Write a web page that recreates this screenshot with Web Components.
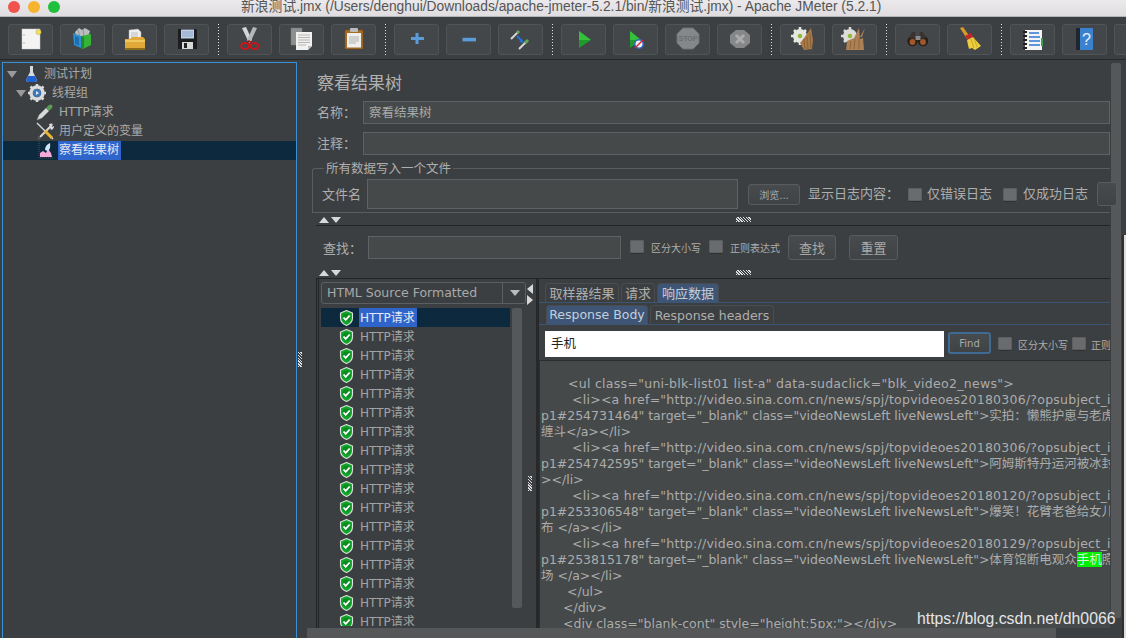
<!DOCTYPE html>
<html lang="zh">
<head>
<meta charset="utf-8">
<title>JMeter</title>
<style>
html,body{margin:0;padding:0;background:#3c3f41}
body{width:1126px;height:638px;overflow:hidden;font:12px "DejaVu Sans","Noto Sans CJK SC",sans-serif;color:#b4b4b4}
</style>
</head>
<body>
<jm-title>新浪测试.jmx (/Users/denghui/Downloads/apache-jmeter-5.2.1/bin/新浪测试.jmx) - Apache JMeter (5.2.1)</jm-title>

<jm-toolbar>
  <jm-tool><svg viewBox="0 0 45 31"><rect x="14" y="5" width="18" height="20" fill="#f4f4f2" stroke="#cfcfcf" stroke-width=".5"/><circle cx="16" cy="11" r=".7" fill="#999"/><circle cx="16" cy="19" r=".7" fill="#999"/><circle cx="30.500" cy="8" r="2.600" fill="#f2df6b" stroke="#b9a83c" stroke-width=".5"/></svg></jm-tool>
  <jm-tool><svg viewBox="0 0 45 31"><path d="M15 8l4-4 3 2 3-2 5 3-2 6H16z" fill="#b9bdc0"/><path d="M18 6l2 7M23 5l1 8" stroke="#85898c" stroke-width=".8"/><path d="M13 9l8 3v12l-7-3z" fill="#2f8fd0"/><path d="M15 12l4 1.500v8l-4-1.500z" fill="#1f6fae"/><path d="M21 12l10-2v11l-8 4-2-1z" fill="#35b336"/><path d="M21 12l3 1v12l-3-1z" fill="#1f8a2a"/></svg></jm-tool>
  <jm-tool><svg viewBox="0 0 45 31"><path d="M17 6l9-1 3 3 0 9H17z" fill="#efefef" stroke="#aaa" stroke-width=".5"/><path d="M19 9h7M19 11h7M19 13h7" stroke="#aaa" stroke-width=".7"/><path d="M13 15h5l2-2h11l2 2v9l-1 2H14l-1-1z" fill="#e1a93a"/><path d="M13 16h20v2H13z" fill="#f0c860"/><path d="M14 26h18l1-2H13z" fill="#8d6a1c"/></svg></jm-tool>
  <jm-tool><svg viewBox="0 0 45 31"><path d="M14 5h18l1 1v19H14z" fill="#1c1d20"/><rect x="17" y="5.500" width="13" height="9" fill="#bcd0e6"/><path d="M18 8h11M18 10h11M18 12h11" stroke="#7d97b5" stroke-width=".7"/><rect x="18" y="18" width="11" height="7" fill="#d8d8d8"/><rect x="20" y="19" width="3" height="5" fill="#222"/></svg></jm-tool>
  <jm-sep></jm-sep>
  <jm-tool><svg viewBox="0 0 45 31"><path d="M15 4l4-1 6 13-3 3z" fill="#d4d6d8"/><path d="M30 4l-4-1-6 13 3 3z" fill="#b4b6b8"/><ellipse cx="18" cy="22" rx="3.800" ry="3" fill="none" stroke="#c8161b" stroke-width="2"/><ellipse cx="27.500" cy="22" rx="3.800" ry="3" fill="none" stroke="#c8161b" stroke-width="2"/><path d="M20 19l2-2 3 2" stroke="#a51216" fill="none" stroke-width="1.500"/></svg></jm-tool>
  <jm-tool><svg viewBox="0 0 45 31"><rect x="12" y="4" width="11" height="17" fill="#8d8f91" stroke="#77797b" stroke-width=".5"/><path d="M17 8h16v14l-4 4H17z" fill="#f1f1ef"/><path d="M19 11h12M19 13.500h12M19 16h12M19 18.500h12M19 21h8" stroke="#999" stroke-width=".7"/><path d="M29 26l4-4h-4z" fill="#bdbdbd"/></svg></jm-tool>
  <jm-tool><svg viewBox="0 0 45 31"><rect x="14" y="6" width="18" height="19" rx="1" fill="#a66c25" stroke="#7a4c16" stroke-width=".5"/><rect x="16" y="9" width="14" height="14.500" fill="#efefed"/><path d="M18 13h10M18 15h10M18 17h10M18 19h7" stroke="#999" stroke-width=".7"/><rect x="19" y="4" width="8" height="4" rx="1" fill="#b9bbbd"/></svg></jm-tool>
  <jm-sep></jm-sep>
  <jm-tool><svg viewBox="0 0 45 31"><path d="M23 9v11M17 14.500h13" stroke="#5b9bd8" stroke-width="3"/></svg></jm-tool>
  <jm-tool><svg viewBox="0 0 45 31"><rect x="16.500" y="13.800" width="13.500" height="3.600" fill="#5b9bd8"/></svg></jm-tool>
  <jm-tool><svg viewBox="0 0 45 31"><path d="M13 15l7-7" stroke="#d5d5d5" stroke-width="2"/><path d="M19 9l2-2" stroke="#62a85b" stroke-width="3"/><path d="M21 25l7-7" stroke="#d5d5d5" stroke-width="2"/><path d="M27 19l3-3" stroke="#62a85b" stroke-width="3"/><path d="M19 12l5 5" stroke="#2a6fd2" stroke-width="2"/><path d="M26 19l-5-1 3-3z" fill="#2a6fd2"/></svg></jm-tool>
  <jm-sep></jm-sep>
  <jm-tool><svg viewBox="0 0 45 31"><path d="M18 7l12 9-12 8z" fill="#1f9a2c"/><path d="M18 7l12 9-12 0z" fill="#37c03c"/></svg></jm-tool>
  <jm-tool><svg viewBox="0 0 45 31"><path d="M17 7l11 9-11 8z" fill="#1f9a2c"/><path d="M17 7l11 9-11 0z" fill="#37c03c"/><circle cx="26" cy="20" r="4.200" fill="#eef2f8" stroke="#2c68c8" stroke-width="1.500"/><path d="M22 24l8-8" stroke="#d8242a" stroke-width="1.500"/></svg></jm-tool>
  <jm-tool><svg viewBox="0 0 45 31"><path d="M18 4h10l6 6v9l-6 6H18l-6-6v-9z" fill="#858789" stroke="#6f7173"/><text x="23" y="17" text-anchor="middle" font-family="Liberation Sans" font-weight="700" font-size="7" fill="#6c6e70">STOP</text></svg></jm-tool>
  <jm-tool><svg viewBox="0 0 45 31"><path d="M19 6h8l6 5v8l-6 5h-8l-6-5v-8z" fill="#858789"/><path d="M19 11l8 8M27 11l-8 8" stroke="#a9abad" stroke-width="3"/></svg></jm-tool>
  <jm-sep></jm-sep>
  <jm-tool><svg viewBox="0 0 45 31"><circle cx="20" cy="12" r="7" fill="#e6e6e2"/><path d="M20 3v3M20 18v3M11 12h3M26 12h3M14 6l2 2M26 6l-2 2M14 18l2-2" stroke="#e6e6e2" stroke-width="2.500"/><circle cx="20" cy="12" r="2.300" fill="#93b93c"/><path d="M31 4l-7 10-4 5 4 7 8-1 1-9z" fill="#a97a48"/><path d="M24 15l1 10M27 13l1 12M30 9l1 15" stroke="#7c552c" stroke-width=".7"/></svg></jm-tool>
  <jm-tool><svg viewBox="0 0 45 31"><circle cx="18" cy="12" r="7" fill="#dcdcd8"/><path d="M18 3v3M18 18v3M9 12h3M24 12h3M12 6l2 2M12 18l2-2" stroke="#dcdcd8" stroke-width="2.500"/><circle cx="18" cy="12" r="2.300" fill="#93b93c"/><path d="M33 4l-5 9 2 0 3-9zM27 4l-5 10-7 3-1 9 18 0-1-12-3 1z" fill="#ad8155"/><path d="M19 17l-1 8M23 15l-1 10M27 14v11" stroke="#80592f" stroke-width=".7"/></svg></jm-tool>
  <jm-sep></jm-sep>
  <jm-tool><svg viewBox="0 0 45 31"><circle cx="17.500" cy="17" r="5.200" fill="#26201c"/><circle cx="28" cy="17" r="5.200" fill="#26201c"/><circle cx="17.500" cy="18" r="2.900" fill="#a3582a"/><circle cx="28" cy="18" r="2.900" fill="#a3582a"/><path d="M14 14l3-6h3l1 7zM31 14l-3-6h-3l-1 7z" fill="#3a3330"/><rect x="20.500" y="12" width="5" height="4" fill="#8a8a8a"/></svg></jm-tool>
  <jm-tool><svg viewBox="0 0 45 31"><path d="M13 4l3-1 7 10-3 2z" fill="#d79a28"/><path d="M18 12l6-3 2 4-5 3z" fill="#c8242a"/><path d="M20 16l6-3 8 9-6 4-3-2-3 1-1-4z" fill="#eccd3c"/><path d="M24 15l3 9M27 14l3 9" stroke="#b8962a" stroke-width=".7"/></svg></jm-tool>
  <jm-sep></jm-sep>
  <jm-tool><svg viewBox="0 0 45 31"><rect x="15" y="6" width="17" height="20" fill="#f4f4f4"/><path d="M19 9h10M19 13h11M19 17h11M19 21h11" stroke="#2e77d0" stroke-width="1.500"/><path d="M13 8h4M13 12h4M13 16h4M13 20h4M13 24h4" stroke="#222" stroke-width="1.800"/><rect x="31" y="14" width="2" height="8" fill="#3aa24a"/></svg></jm-tool>
  <jm-tool><svg viewBox="0 0 45 31"><rect x="14" y="4" width="17" height="22" fill="#3a82cf"/><rect x="14" y="4" width="4" height="22" fill="#20262c"/><text x="24.500" y="21" text-anchor="middle" font-family="Liberation Sans" font-size="16" fill="#eaf2fb">?</text></svg></jm-tool>
  <jm-tool></jm-tool>
</jm-toolbar>

<jm-main>
  <jm-tree>
    <jm-node depth="0" twisty><svg slot="icon" viewBox="0 0 18 18"><path d="M7 1h3v6l4 8q0 2-2 2H5q-2 0-2-2l4-8z" fill="#d8dade"/><path d="M5 11h7l2 4q0 2-2 2H5q-2 0-2-2z" fill="#1f62d0"/></svg>测试计划</jm-node>
    <jm-node depth="1" twisty><svg slot="icon" viewBox="0 0 18 18"><circle cx="9" cy="9" r="6" fill="none" stroke="#d9dbdd" stroke-width="3.500"/><path d="M9 0v3M9 15v3M0 9h3M15 9h3M2.500 2.500l2 2M13.500 13.500l2 2M15.500 2.500l-2 2M4.500 13.500l-2 2" stroke="#d9dbdd" stroke-width="2.500"/><circle cx="9" cy="9" r="4" fill="#3f78b8"/><path d="M8 7l3 2-3 2z" fill="#dfe9f4"/></svg>线程组</jm-node>
    <jm-node depth="2"><svg slot="icon" viewBox="0 0 18 18"><path d="M1 17l2-5 7-7 3 3-7 7z" fill="#d8d8d8" stroke="#888" stroke-width=".5"/><path d="M10 5l3-3q2-1 3 0t0 3l-3 3z" fill="#5b9a57"/></svg>HTTP请求</jm-node>
    <jm-node depth="2"><svg slot="icon" viewBox="0 0 18 18"><path d="M1 1l16 16" stroke="#d6d6d6" stroke-width="1.500"/><path d="M16 3l-5 5-7 7" stroke="#dcdcdc" stroke-width="2"/><path d="M4 15l-2 2" stroke="#555" stroke-width="3"/><path d="M9 9l7 7" stroke="#e9b52c" stroke-width="3"/><path d="M13 2q3-1 4 0l-2 2 1 1 2-1q0 3-3 4z" fill="#dcdcdc"/></svg>用户定义的变量</jm-node>
    <jm-node depth="2" selected><svg slot="icon" viewBox="0 0 18 18"><path d="M3 0v17h15" fill="none" stroke="#666" stroke-width=".7" stroke-dasharray="1 1"/><path d="M4 16v-4l3-2 3 2 2-4 3 4 1 4z" fill="#f3a8d8"/><path d="M9 9q0-5 5-7 1 5-2 8z" fill="#cfe4f6"/></svg>察看结果树</jm-node>
  </jm-tree>
  <jm-vsplit style="width:8px"></jm-vsplit>
  <jm-pane>
    <jm-page-title>察看结果树</jm-page-title>
    <jm-row style="margin-bottom:8px;padding-left:12px"><jm-label style="width:46px;padding-bottom:2px">名称：</jm-label><jm-field style="flex:1">察看结果树</jm-field></jm-row>
    <jm-row style="padding-left:12px"><jm-label style="width:46px;padding-bottom:2px">注释：</jm-label><jm-field style="flex:1"></jm-field></jm-row>
    <jm-group legend="所有数据写入一个文件">
      <jm-label style="width:45px;padding-bottom:2px">文件名</jm-label>
      <jm-field style="width:371px;height:30px;margin-right:10px"></jm-field>
      <jm-btn style="width:52px;height:21px;font-size:10px;margin-right:8px">浏览...</jm-btn>
      <jm-label style="width:100px;padding-bottom:3px">显示日志内容：</jm-label>
      <jm-check style="margin:2px 5px 0 0"></jm-check>
      <jm-label style="width:76px;padding-bottom:3px">仅错误日志</jm-label>
      <jm-check style="margin:2px 6px 0 0"></jm-check>
      <jm-label style="width:74px;padding-bottom:3px">仅成功日志</jm-label>
      <jm-btn style="width:20px;height:24px;flex:none"></jm-btn>
    </jm-group>
    <jm-split></jm-split>
    <jm-row style="height:40px;padding-left:18px;padding-top:2px;box-sizing:border-box">
      <jm-label style="width:45px">查找：</jm-label>
      <jm-field style="width:253px;margin-right:9px"></jm-field>
      <jm-check style="margin-right:7px"></jm-check>
      <jm-label style="width:58px;font-size:10px">区分大小写</jm-label>
      <jm-check style="margin-right:7px"></jm-check>
      <jm-label style="width:58px;font-size:10px">正则表达式</jm-label>
      <jm-btn style="width:48px;height:25px;margin-right:13px;font-size:13px">查找</jm-btn>
      <jm-btn style="width:49px;height:25px;font-size:13px">重置</jm-btn>
    </jm-row>
    <jm-split></jm-split>
    <jm-bottom>
      <jm-results>
        <jm-combo>HTML Source Formatted</jm-combo>
        <jm-list>
          <jm-result selected>HTTP请求</jm-result><jm-result>HTTP请求</jm-result><jm-result>HTTP请求</jm-result><jm-result>HTTP请求</jm-result><jm-result>HTTP请求</jm-result><jm-result>HTTP请求</jm-result><jm-result>HTTP请求</jm-result><jm-result>HTTP请求</jm-result><jm-result>HTTP请求</jm-result><jm-result>HTTP请求</jm-result><jm-result>HTTP请求</jm-result><jm-result>HTTP请求</jm-result><jm-result>HTTP请求</jm-result><jm-result>HTTP请求</jm-result><jm-result>HTTP请求</jm-result><jm-result>HTTP请求</jm-result><jm-result>HTTP请求</jm-result>
        </jm-list>
      </jm-results>
      <jm-hsplit></jm-hsplit>
      <jm-detail>
        <jm-tabs line>
          <jm-tab style="width:74px;margin-left:6px;font-size:13px;padding-bottom:1px">取样器结果</jm-tab>
          <jm-tab style="width:34px;font-size:13px;padding-bottom:1px">请求</jm-tab>
          <jm-tab active style="width:62px;font-size:13px">响应数据</jm-tab>
        </jm-tabs>
        <jm-tabs inner line>
          <jm-tab active inner style="width:102px;margin-left:7px">Response Body</jm-tab>
          <jm-tab inner style="width:124px;padding-top:1px">Response headers</jm-tab>
        </jm-tabs>
        <jm-findbar>
          <jm-input>手机</jm-input>
          <jm-btn focus style="width:43px;height:22px;font-size:10px;margin:0 7px 2px 0">Find</jm-btn>
          <jm-check style="margin-right:6px"></jm-check>
          <jm-label style="width:54px;font-size:10px">区分大小写</jm-label>
          <jm-check style="margin-right:5px"></jm-check>
          <jm-label style="font-size:10px;white-space:nowrap">正则表达式</jm-label>
        </jm-findbar>
        <jm-code>
          <jm-line at="29" ls=".28">&lt;ul class="uni-blk-list01 list-a" data-sudaclick="blk_video2_news"&gt;</jm-line>
          <jm-line at="33" ls=".25">&lt;li&gt;&lt;a href="http://video.sina.com.cn/news/spj/topvideoes20180306/?opsubject_i</jm-line>
          <jm-line ls="-.03">p1#254731464" target="_blank" class="videoNewsLeft liveNewsLeft"&gt;实拍：懒熊护崽与老虎</jm-line>
          <jm-line>缠斗&lt;/a&gt;&lt;/li&gt;</jm-line>
          <jm-line at="33" ls=".25">&lt;li&gt;&lt;a href="http://video.sina.com.cn/news/spj/topvideoes20180306/?opsubject_i</jm-line>
          <jm-line ls="-.03">p1#254742595" target="_blank" class="videoNewsLeft liveNewsLeft"&gt;阿姆斯特丹运河被冰封</jm-line>
          <jm-line>&gt;&lt;/li&gt;</jm-line>
          <jm-line at="33" ls=".25">&lt;li&gt;&lt;a href="http://video.sina.com.cn/news/spj/topvideoes20180120/?opsubject_i</jm-line>
          <jm-line ls="-.03">p1#253306548" target="_blank" class="videoNewsLeft liveNewsLeft"&gt;爆笑！花臂老爸给女儿</jm-line>
          <jm-line>布 &lt;/a&gt;&lt;/li&gt;</jm-line>
          <jm-line at="33" ls=".25">&lt;li&gt;&lt;a href="http://video.sina.com.cn/news/spj/topvideoes20180129/?opsubject_i</jm-line>
          <jm-line ls="-.03">p1#253815178" target="_blank" class="videoNewsLeft liveNewsLeft"&gt;体育馆断电观众<jm-mark>手机</jm-mark>照</jm-line>
          <jm-line>场 &lt;/a&gt;&lt;/li&gt;</jm-line>
          <jm-line at="28">&lt;/ul&gt;</jm-line>
          <jm-line at="24">&lt;/div&gt;</jm-line>
          <jm-line at="24">&lt;div class="blank-cont" style="height:5px;"&gt;&lt;/div&gt;</jm-line>
        </jm-code>
      </jm-detail>
    </jm-bottom>
    <jm-hbar></jm-hbar>
  </jm-pane>
  <jm-vbar></jm-vbar>
  <jm-edge></jm-edge>
  <jm-mark-water>https://blog.csdn.net/dh0066</jm-mark-water>
</jm-main>

<script>
const def=(name,css,html='<slot></slot>',extra)=>{
  customElements.define(name,class extends HTMLElement{
    constructor(){super();const r=this.attachShadow({mode:'open'});
      r.innerHTML='<style>'+css+'</style>'+(typeof html==='function'?html(this):html);}
    connectedCallback(){ if(extra) extra(this); }
  });
};
const DOTS="background:repeating-linear-gradient(45deg,#ddd 0 1px,#3c3f41 1px 2px);";
def('jm-title',`:host{display:block;height:17px;box-sizing:border-box;background:linear-gradient(#ebe9eb,#dfdddf);border-bottom:1px solid #b5b5b5;color:#555;font:13.800px/14px "Liberation Sans","Noto Sans CJK SC",sans-serif;position:relative;padding-left:241px;white-space:nowrap;overflow:hidden}
 i{position:absolute;top:1px;width:12px;height:12px;border-radius:50%}`,
 `<i style="left:8px;background:#f0544c"></i><i style="left:28px;background:#f6b32d"></i><i style="left:48px;background:#1fc03c"></i><slot></slot>`);
def('jm-toolbar',`:host{display:flex;gap:7px;height:43px;box-sizing:border-box;padding:7px 0 0 8px;background:#3c3f41;border-bottom:1px solid #26282a;overflow:hidden}`);
def('jm-tool',`:host{display:block;flex:none;width:45px;height:31px;box-sizing:border-box;border:1px solid #515456;border-radius:3px;background:#43474a}
 ::slotted(svg){display:block;width:45px;height:31px;margin:-1px}`);
def('jm-sep',`:host{display:block;flex:none;width:4px;height:31px;background:repeating-linear-gradient(#e2e2e2 0 1px,transparent 1px 3px) center/1px 100% no-repeat}`);
def('jm-main',`:host{display:flex;height:578px;position:relative;overflow:hidden;box-sizing:border-box;padding:2px 0 0 2px}`);
def('jm-tree',`:host{display:block;flex:none;width:295px;height:590px;box-sizing:border-box;border:1px solid #3a8fd6;padding-top:2px;}`);
def('jm-node',`:host{display:block;height:19px;line-height:19px;white-space:nowrap;font-size:12px;color:#a9a9a9;position:relative;box-sizing:border-box}
 :host([selected]){background:#0d293e}
 .t{position:absolute;top:6px;width:0;height:0;border:5px solid transparent;border-top:7px solid #9a9a9a;border-bottom:0}
 .i{position:absolute;top:0;width:18px;height:18px}
 ::slotted(svg){display:block;width:18px;height:18px}
 .x{position:absolute;top:0;padding:0 1px;line-height:19px}
 :host([selected]) .x{background:#2f65ca;color:#e4e9f4;height:19px;padding:0 2px 0 1px;margin-right:-1px}`,
 h=>{const d=+h.getAttribute('depth');const ix=[20,25,33][d];const tx=[40,48,55][d];const tw=[4,13][d];
  return (h.hasAttribute('twisty')?`<span class="t" style="left:${tw}px"></span>`:'')+`<span class="i" style="left:${ix}px"><slot name="icon"></slot></span><span class="x" style="left:${tx}px"><slot></slot></span>`});
def('jm-vsplit',`:host{display:block;flex:none;position:relative}
 i{position:absolute;left:1px;top:290px;width:4px;height:15px;${DOTS}}`,`<i></i>`);
def('jm-pane',`:host{display:flex;flex-direction:column;flex:none;width:805px;height:576px;position:relative}`);
def('jm-page-title',`:host{display:block;height:39px;padding:11px 0 0 12px;box-sizing:border-box;font-size:17px;line-height:20px;color:#b0b0b0}`);
def('jm-row',`:host{display:flex;align-items:center;flex:none}`);
def('jm-label',`:host{display:block;flex:none;font-size:13px;color:#aeaeae;white-space:nowrap}`);
def('jm-field',`:host{display:block;flex:none;height:23px;line-height:21px;box-sizing:border-box;background:#45494a;border:1px solid #5f6264;padding:0 5px;font-size:12.500px;color:#a9a9a9;white-space:nowrap;overflow:hidden}`);
def('jm-group',`:host{display:block;flex:none;position:relative;margin-top:13px;margin-left:7px;height:45px;box-sizing:border-box;border-top:1px solid #5a5d5f;border-left:1px solid #5a5d5f;border-bottom:1px solid #5a5d5f;border-top-left-radius:3px}
 b{position:absolute;left:11px;top:-9px;padding:0 2px;background:#3c3f41;font:400 12.500px/17px "DejaVu Sans","Noto Sans CJK SC",sans-serif;color:#aeaeae;white-space:nowrap}
 div{display:flex;align-items:center;height:30px;margin-top:10px;padding-left:9px;white-space:nowrap}`,
 h=>`<b>${h.getAttribute('legend')}</b><div><slot></slot></div>`);
def('jm-btn',`:host{display:flex;flex:none;align-items:center;justify-content:center;box-sizing:border-box;border:1px solid #595c5e;border-radius:3px;background:linear-gradient(#474b4e,#3f4345);color:#a9a9a9;font-size:12px}
 :host([focus]){border:2px solid #3f6a94}`);
def('jm-check',`:host{display:block;flex:none;width:14px;height:14px;box-sizing:border-box;border-radius:2px;background:#696b6d;border-bottom:1px solid #2f3132;box-shadow:inset 0 0 0 1px #5c5e60}`,'');
def('jm-split',`:host{display:block;flex:none;position:relative;height:13px;border-bottom:1px solid #222527;margin-left:11px;box-sizing:border-box;}
 .u,.d{position:absolute;top:4px;width:0;height:0;border:5.500px solid transparent;border-top-width:0}
 .u{left:3px;border-bottom:6px solid #d8d8d8}
 .d{left:15px;border-top:6px solid #d8d8d8;border-bottom:0}
 i{position:absolute;left:420px;top:4px;width:15px;height:5px;${DOTS}}`,`<span class="u"></span><span class="d"></span><i></i>`);
def('jm-bottom',`:host{display:flex;flex:1;min-height:0;padding-left:11px;overflow:hidden}`);
def('jm-results',`:host{display:block;flex:none;width:211px;box-sizing:border-box;border-left:3px double #222527;padding:3px 0 0 2px}`);
def('jm-combo',`:host{display:block;position:relative;width:205px;height:22px;line-height:20px;box-sizing:border-box;border:1px solid #5c5f61;border-radius:3px;padding-left:5px;font-size:12.500px;color:#a9a9a9;white-space:nowrap}
 s{position:absolute;right:22px;top:0;height:20px;border-left:1px solid #5c5f61}
 i{position:absolute;right:5px;top:7px;border:5px solid transparent;border-top:6px solid #bbb;border-bottom:0}`,`<slot></slot><s></s><i></i>`);
def('jm-list',`:host{display:block;position:relative;margin-top:4px;height:318px;overflow:hidden}
 i{position:absolute;left:191px;top:0;width:10px;height:300px;background:#555759;border-radius:2px}`,`<slot></slot><i></i>`);
def('jm-result',`:host{display:block;height:19px;width:189px;line-height:19px;position:relative;font-size:12px;color:#a3a3a3;white-space:nowrap}
 :host([selected]){background:#0d293e}
 svg{position:absolute;left:18px;top:2px;width:15px;height:16px}
 span{position:absolute;left:38px;top:0;padding:1px 2px 0 1px;height:18px;}
 :host([selected]) span{background:#2f65ca;color:#e4e9f4}`,
 `<svg viewBox="0 0 15 16"><path d="M7.500.5l6 2.500v5q0 5-6 7.500-6-2.500-6-7.500V3z" fill="#11a52a" stroke="#dfe3df" stroke-width="1.100"/><circle cx="7.500" cy="7.500" r="4" fill="#0c8a22"/><path d="M4.500 7.500l2.200 2.400 4-4.400" fill="none" stroke="#fff" stroke-width="1.800"/></svg><span><slot></slot></span>`);
def('jm-hsplit',`:host{display:block;flex:none;width:12px;position:relative;border-right:3px solid #26282a;box-sizing:border-box}
 .a,.b{position:absolute;left:0;width:0;height:0;border:5px solid transparent;border-left-width:0}
 .a{top:5px;border-right:6px solid #d8d8d8}
 .b{top:16px;border-left:6px solid #d8d8d8;border-right:0}
 i{position:absolute;left:1px;top:197px;width:4px;height:15px;${DOTS}}`,`<span class="a"></span><span class="b"></span><i></i>`);
def('jm-detail',`:host{display:flex;flex-direction:column;flex:1;min-width:0;padding-top:4px}`);
def('jm-tabs',`:host{display:flex;flex:none;height:20px;gap:2px;box-sizing:border-box;border-bottom:1px solid #3b5574;align-items:flex-end}
 :host([inner]){height:22px;padding-top:3px;border-bottom:1px solid #3b5574;}`);
def('jm-tab',`:host{display:flex;flex:none;align-items:center;justify-content:center;height:19px;box-sizing:border-box;border:1px solid #4a4d4f;border-bottom:0;border-radius:4px 4px 0 0;font-size:12.500px;color:#aeaeae;white-space:nowrap}
 :host([active]){background:#3f5576;color:#c4cfdc;padding-bottom:2px}`);
def('jm-findbar',`:host{display:flex;flex:none;align-items:center;height:36px;padding:3px 0 0 6px;overflow:hidden;border-bottom:1px solid #2b2d2f;box-sizing:border-box}`);
def('jm-input',`:host{display:block;flex:none;width:399px;height:26px;line-height:26px;background:#fff;color:#222;padding-left:6px;box-sizing:border-box;font-size:12.500px;margin-right:4px}`);
def('jm-code',`:host{display:block;flex:1;min-height:0;overflow:hidden;background:#45494a;padding-top:15px;border-left:1px solid #2b2d2f}`);
def('jm-line',`:host{display:block;height:16px;line-height:16px;font-size:12.500px;color:#acacac;white-space:pre;overflow:hidden;padding-left:1px}`,`<slot></slot>`,
 h=>{const a=h.getAttribute('at');if(a)h.style.paddingLeft=(a-1)+'px';const l=h.getAttribute('ls');if(l)h.style.letterSpacing=l+'px';});
def('jm-mark',`:host{display:inline;background:#00f000;color:#d9f0d9}`);
def('jm-hbar',`:host{display:block;flex:none;margin-left:2px;width:749px;height:10px;background:#555759}`,'');
def('jm-vbar',`:host{display:block;flex:none;margin:1px 0 0 1px;width:10px;height:555px;background:#555759;border-radius:2px}`,'');
def('jm-edge',`:host{position:absolute;right:0;top:175px;width:2px;bottom:0;background:#dedede;box-shadow:-2px 0 0 #2d2f31}`,'');
def('jm-mark-water',`:host{position:absolute;left:917px;top:550px;font:15.800px "Liberation Sans",sans-serif;color:#e4e6e6;white-space:nowrap}`);
</script>
</body>
</html>
